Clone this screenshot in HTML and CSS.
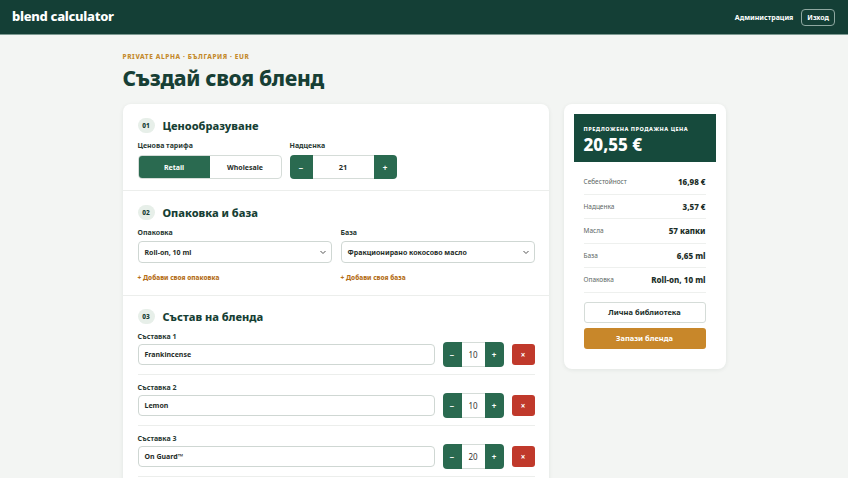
FILE: index.html
```html
<!DOCTYPE html>
<html lang="bg">
<head>
<meta charset="utf-8">
<title>blend calculator</title>
<link rel="stylesheet" href="styles.css">
</head>
<body>
<header class="topbar">
  <div class="logo">blend calculator</div>
  <nav class="topnav">
    <a class="nav-link">Администрация</a>
    <a class="nav-btn">Изход</a>
  </nav>
</header>

<div class="page">
  <div class="eyebrow">PRIVATE ALPHA · БЪЛГАРИЯ · EUR</div>
  <h1 class="title">Създай своя бленд</h1>

  <div class="layout">
    <main class="card main-card">
      <section class="section s1">
        <div class="sec-head"><span class="badge">01</span><h2>Ценообразуване</h2></div>
        <div class="price-row">
          <div class="field">
            <div class="label">Ценова тарифа</div>
            <div class="segment">
              <span class="seg active">Retail</span>
              <span class="seg">Wholesale</span>
            </div>
          </div>
          <div class="field">
            <div class="label">Надценка</div>
            <div class="stepper big">
              <span class="st-btn">−</span>
              <span class="st-val">21</span>
              <span class="st-btn">+</span>
            </div>
          </div>
        </div>
      </section>

      <section class="section s2">
        <div class="sec-head"><span class="badge">02</span><h2>Опаковка и база</h2></div>
        <div class="two-col">
          <div class="field">
            <div class="label">Опаковка</div>
            <div class="select"><span>Roll-on, 10 ml</span>
              <svg width="8" height="8" viewBox="0 0 8 8"><path d="M1.5 3 L4 5.5 L6.5 3" fill="none" stroke="#555" stroke-width="1"/></svg></div>
            <div class="add-link">+ Добави своя опаковка</div>
          </div>
          <div class="field">
            <div class="label">База</div>
            <div class="select"><span>Фракционирано кокосово масло</span>
              <svg width="8" height="8" viewBox="0 0 8 8"><path d="M1.5 3 L4 5.5 L6.5 3" fill="none" stroke="#555" stroke-width="1"/></svg></div>
            <div class="add-link">+ Добави своя база</div>
          </div>
        </div>
      </section>

      <section class="section s3">
        <div class="sec-head"><span class="badge">03</span><h2>Състав на бленда</h2></div>
        <div class="ing">
          <div class="label">Съставка 1</div>
          <div class="ing-row">
            <div class="text-input">Frankincense</div>
            <div class="stepper small"><span class="st-btn">−</span><span class="st-val">10</span><span class="st-btn">+</span></div>
            <span class="del">×</span>
          </div>
        </div>
        <div class="ing">
          <div class="label">Съставка 2</div>
          <div class="ing-row">
            <div class="text-input">Lemon</div>
            <div class="stepper small"><span class="st-btn">−</span><span class="st-val">10</span><span class="st-btn">+</span></div>
            <span class="del">×</span>
          </div>
        </div>
        <div class="ing">
          <div class="label">Съставка 3</div>
          <div class="ing-row">
            <div class="text-input">On Guard™</div>
            <div class="stepper small"><span class="st-btn">−</span><span class="st-val">20</span><span class="st-btn">+</span></div>
            <span class="del">×</span>
          </div>
        </div>
      </section>
    </main>

    <aside class="card side-card">
      <div class="price-box">
        <div class="pb-label">ПРЕДЛОЖЕНА ПРОДАЖНА ЦЕНА</div>
        <div class="pb-value">20,55 €</div>
      </div>
      <div class="summary">
        <div class="sum-row"><span>Себестойност</span><b>16,98 €</b></div>
        <div class="sum-row"><span>Надценка</span><b>3,57 €</b></div>
        <div class="sum-row"><span>Масла</span><b>57 капки</b></div>
        <div class="sum-row"><span>База</span><b>6,65 ml</b></div>
        <div class="sum-row"><span>Опаковка</span><b>Roll-on, 10 ml</b></div>
      </div>
      <div class="actions">
        <span class="btn btn-outline">Лична библиотека</span>
        <span class="btn btn-gold">Запази бленда</span>
      </div>
    </aside>
  </div>
</div>
</body>
</html>
```

FILE: styles.css
```css
* { box-sizing: border-box; }
html, body { margin: 0; padding: 0; }
body {
  background: #f3f5f3;
  font-family: "Noto Sans", "Open Sans", "Liberation Sans", sans-serif;
  color: #173f35;
  height: 478px;
  overflow: hidden;
}

.topbar {
  height: 35px;
  background: #143f36;
  display: flex;
  align-items: center;
  justify-content: space-between;
  padding: 0 13px 0 12px;
  border-bottom: 1px solid #7d9a92;
}
.logo {
  color: #fff;
  font-weight: 800;
  font-size: 13px;
  letter-spacing: -0.3px;
  margin-top: -3px;
}
.topnav { display: flex; align-items: center; gap: 8px; }
.nav-link { color: #fff; font-size: 7px; font-weight: 700; }
.nav-btn {
  color: #fff; font-size: 7px; font-weight: 700;
  border: 1px solid #8fa8a1;
  border-radius: 4px;
  height: 17px; padding: 0 5px;
  display: flex; align-items: center;
}

.page { width: 603px; margin: 0 auto; padding-top: 17px; }
.eyebrow {
  color: #c48a2c;
  font-size: 6.5px;
  font-weight: 800;
  letter-spacing: 0.6px;
  line-height: 9px;
}
.title {
  margin: 2px 0 0;
  font-size: 21px;
  font-weight: 800;
  line-height: 30px;
  letter-spacing: -0.3px;
  color: #173f35;
}
.layout {
  display: flex;
  align-items: flex-start;
  gap: 15px;
  margin-top: 11px;
}
.card {
  background: #fff;
  border-radius: 8px;
  box-shadow: 0 1px 4px rgba(20, 50, 40, 0.08);
}
.main-card { width: 426px; height: 400px; overflow: hidden; }
.side-card { width: 162px; padding: 10px 10px 20px; }

.section { padding: 14px 14px 0 15px; border-bottom: 1px solid #eceeec; }
.s1 { height: 87px; }
.s2 { height: 105px; }
.s3 { border-bottom: none; padding-top: 13px; }

.sec-head { display: flex; align-items: center; gap: 8px; height: 15px; }
.badge {
  width: 17px; height: 15px; border-radius: 8px;
  background: #e7efe9;
  color: #173f35;
  font-size: 6.5px; font-weight: 800;
  display: flex; align-items: center; justify-content: center;
}
.sec-head h2 {
  margin: 0;
  font-size: 11px;
  font-weight: 800;
  color: #173f35;
}

.label {
  font-size: 7px;
  font-weight: 700;
  color: #2a3a34;
  line-height: 10px;
  margin-bottom: 4px;
}
.price-row { display: flex; gap: 8px; margin-top: 8px; }

.segment {
  display: flex;
  width: 144px; height: 24px;
  border: 1px solid #d5dcd8;
  border-radius: 4px;
  overflow: hidden;
}
.seg {
  flex: 1;
  display: flex; align-items: center; justify-content: center;
  font-size: 7px; font-weight: 700; color: #1f2d28;
}
.seg.active { background: #2a6a50; color: #fff; }

.stepper { display: flex; border-radius: 4px; overflow: hidden; border: 1px solid #d5dcd8; }
.st-btn {
  background: #2a6a50; color: #fff;
  display: flex; align-items: center; justify-content: center;
  font-size: 8px; font-weight: 700;
}
.st-val {
  display: flex; align-items: center; justify-content: center;
  background: #fff;
  font-size: 7.5px;
}
.stepper.big { width: 107px; height: 24px; border: none; }
.stepper.big .st-btn { width: 23px; }
.stepper.big .st-val { flex: 1; font-weight: 700; color: #1f2d28; border-top: 1px solid #d5dcd8; border-bottom: 1px solid #d5dcd8; }
.stepper.small { width: 61px; height: 25px; border: none; flex: none; }
.stepper.small .st-btn { width: 19px; }
.stepper.small .st-val { flex: 1; color: #333; font-size: 8px; border-top: 1px solid #d5dcd8; border-bottom: 1px solid #d5dcd8; }

.two-col { display: grid; grid-template-columns: 194px 194px; gap: 9px; margin-top: 8px; }
.two-col .label { margin-bottom: 3px; }
.select {
  height: 22px;
  border: 1px solid #cfd7d3;
  border-radius: 4px;
  display: flex; align-items: center; justify-content: space-between;
  padding: 0 4px 0 6px;
  font-size: 7px; font-weight: 700; color: #1f2d28;
}
.add-link {
  margin-top: 10px;
  font-size: 6.5px; font-weight: 800;
  color: #b5701a;
}

.ing { border-bottom: 1px solid #eceeec; padding-top: 8px; height: 51px; }
.ing .label { margin-bottom: 0; }
.ing-row { display: flex; align-items: center; gap: 8px; height: 25px; }
.text-input {
  flex: 1;
  height: 21px;
  border: 1px solid #cfd7d3;
  border-radius: 4px;
  display: flex; align-items: center;
  padding: 0 6px;
  font-size: 7px; font-weight: 700; color: #1f2d28;
}
.del {
  width: 23px; height: 21px; border-radius: 3px;
  background: #c0392b; color: #fff;
  display: flex; align-items: center; justify-content: center;
  font-size: 8px; font-weight: 700;
}

.price-box {
  background: #164a3c;
  height: 48px;
  padding: 11px 10px 0;
  color: #fff;
}
.pb-label { font-size: 5.5px; font-weight: 800; letter-spacing: 0.5px; line-height: 8px; }
.pb-value { font-size: 17px; font-weight: 800; line-height: 22px; margin-top: 1px; }

.summary { padding: 8px 10px 0; }
.sum-row {
  height: 24.5px;
  display: flex; align-items: center; justify-content: space-between;
  border-bottom: 1px solid #eef0ee;
}
.sum-row span { font-size: 6.5px; color: #5d6864; }
.sum-row b { font-size: 8px; font-weight: 800; color: #1b2e28; }

.actions { padding: 9px 10px 0; display: flex; flex-direction: column; gap: 5px; }
.btn {
  height: 21px; border-radius: 3px;
  display: flex; align-items: center; justify-content: center;
  font-size: 7.5px; font-weight: 700;
}
.btn-outline { border: 1px solid #d5dcd8; color: #1b2e28; background: #fff; }
.btn-gold { background: #c8872a; color: #fff; }
```
